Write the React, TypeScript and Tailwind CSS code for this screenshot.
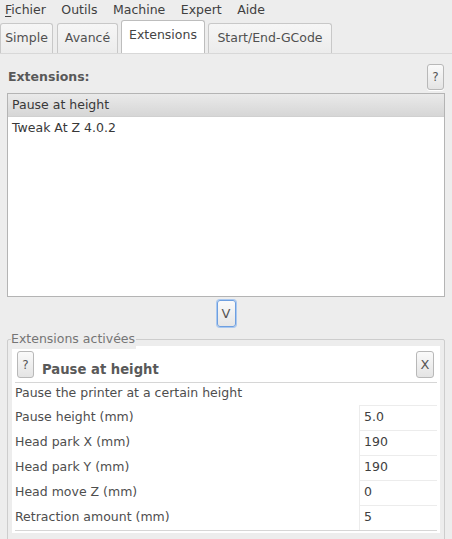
import React from 'react';

const menus = ['Fichier', 'Outils', 'Machine', 'Expert', 'Aide'];
const tabs = [
  { name: 'Simple', w: 'w-[53px]' },
  { name: 'Avancé', w: 'w-[61px]' },
  { name: 'Extensions', w: 'w-[84px]' },
  { name: 'Start/End-GCode', w: 'w-[124px]' },
];

const params = [
  { label: 'Pause height (mm)', value: '5.0' },
  { label: 'Head park X (mm)', value: '190' },
  { label: 'Head park Y (mm)', value: '190' },
  { label: 'Head move Z (mm)', value: '0' },
  { label: 'Retraction amount (mm)', value: '5' },
];

const SmallButton: React.FC<{ label: string; className?: string }> = ({ label, className = '' }) => (
  <button
    className={`flex items-center justify-center rounded-[3px] border border-[#b8b8b8] bg-gradient-to-b from-[#fafafa] to-[#e4e4e4] text-[12px] text-[#555] shadow-[0_1px_0_#fff] ${className}`}
  >
    {label}
  </button>
);

export default function App() {
  return (
    <div
      className="w-[452px] h-[539px] overflow-hidden bg-[#ededed] text-[12.5px] text-[#4e4e4e]"
      style={{ fontFamily: '"DejaVu Sans", "Liberation Sans", sans-serif' }}
    >
      {/* menu bar */}
      <div className="flex h-[20px] items-center gap-[15.5px] pl-[5px] text-[#404040]">
        {menus.map((m, i) => (
          <span key={m}>
            {i === 0 ? (
              <>
                <span className="underline decoration-1 underline-offset-2">F</span>ichier
              </>
            ) : (
              m
            )}
          </span>
        ))}
      </div>

      {/* tabs */}
      <div className="flex h-[34px] items-end border-b border-[#d8d8d8] pt-[2px]">
        {tabs.map((t, i) => {
          const active = t.name === 'Extensions';
          return (
            <div
              key={t.name}
              className={`${t.w} ${i === 0 ? '' : i === 1 ? 'ml-[4px]' : 'ml-[3px]'} ${
                active
                  ? 'flex h-[33px] items-center justify-center rounded-t-[3px] border border-b-0 border-[#bdbdbd] bg-white pb-[3px] text-[#444]'
                  : 'flex h-[30px] items-center justify-center rounded-t-[3px] border border-b-0 border-[#c8c8c8] bg-gradient-to-b from-[#f6f6f6] to-[#ececec] text-[#505050]'
              }`}
            >
              {t.name}
            </div>
          );
        })}
      </div>

      {/* content */}
      <div className="px-[7px] pt-[10px]">
        <div className="flex items-center justify-between pl-[1px] pr-[1px]">
          <span className="font-bold text-[#595959]">Extensions:</span>
          <SmallButton label="?" className="h-[26px] w-[17px]" />
        </div>

        <div className="mt-[3px] h-[204px] border border-[#b4b4b4] bg-white">
          <div className="flex h-[23px] items-center border-b border-[#d0d0d0] bg-gradient-to-b from-[#eaeaea] to-[#d6d6d6] pl-[4px] text-[#383838]">
            Pause at height
          </div>
          <div className="flex h-[22px] items-center pl-[4px] text-[#383838]">Tweak At Z 4.0.2</div>
        </div>

        <div className="mt-[3px] flex justify-center">
          <button className="flex h-[27px] w-[19px] items-center justify-center rounded-[3px] border border-[#6e9fe0] bg-gradient-to-b from-[#fafafa] to-[#e6e6e6] text-[13px] text-[#555] ring-1 ring-[#a9c8f0]">
            V
          </button>
        </div>

        {/* group box */}
        <div className="relative mt-[12px] h-[220px] rounded-[2px] border border-[#cdcdcd] px-[4px] pt-[6px]">
          <span className="absolute -top-[10px] left-[3px] bg-[#ededed] pr-[1px] text-[#757575]">
            Extensions activées
          </span>
          <div className="bg-white px-[3px] pb-[2px] pt-[5px]">
            <div className="flex items-start justify-between pl-[2px] pr-[3px]">
              <div className="flex items-start gap-[8px]">
                <SmallButton label="?" className="h-[27px] w-[17px]" />
                <span className="mt-[9px] text-[13.2px] font-bold text-[#595959]">Pause at height</span>
              </div>
              <SmallButton label="X" className="h-[27px] w-[18px] text-[13px]" />
            </div>
            <div className="mt-[2px] border-t border-[#d6d6d6]" />
            <div className="flex h-[22px] items-center">Pause the printer at a certain height</div>
            {params.map((p) => (
              <div key={p.label} className="flex h-[25px] items-center justify-between">
                <span>{p.label}</span>
                <div className="flex h-[25px] w-[78px] items-center border-l border-t border-[#ececec] pl-[4px] text-[#404040]">
                  {p.value}
                </div>
              </div>
            ))}
            <div className="border-t border-[#d6d6d6]" />
          </div>
        </div>
      </div>
    </div>
  );
}
